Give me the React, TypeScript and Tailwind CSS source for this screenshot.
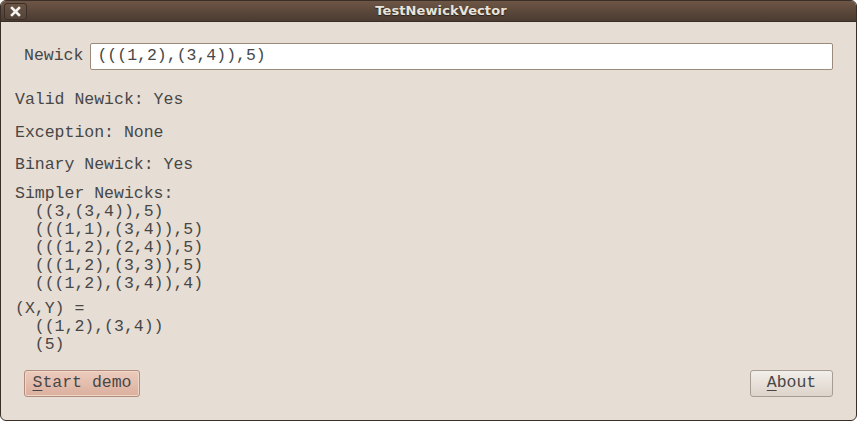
import React from 'react';

const mono = { fontFamily: '"Liberation Mono", "Courier New", monospace' };

const simpler = [
  '  ((3,(3,4)),5)',
  '  (((1,1),(3,4)),5)',
  '  (((1,2),(2,4)),5)',
  '  (((1,2),(3,3)),5)',
  '  (((1,2),(3,4)),4)',
];

export default function App() {
  return (
    <div className="w-[857px] h-[421px] bg-white">
      <div className="w-[857px] h-[421px] flex flex-col rounded-t-[6px] rounded-b-[6px] overflow-hidden border border-[#3a2f28] bg-[#e6ddd4]">
        {/* title bar */}
        <div className="relative h-[21px] shrink-0 flex items-center justify-center pl-[25px] bg-gradient-to-b from-[#6e5646] to-[#4a3b31] border-b border-[#3a2f28]">
          <div className="absolute left-[3px] top-[2px] w-[23px] h-[17px] rounded-[3px] border border-[#3b2f27] bg-gradient-to-b from-[#6a5444] to-[#54433a] flex items-center justify-center">
            <svg width="11" height="11" viewBox="0 0 11 11">
              <path d="M2 2 L9 9 M9 2 L2 9" stroke="#f4f2ee" strokeWidth="2.6" strokeLinecap="square" />
            </svg>
          </div>
          <span
            className="text-[13px] font-bold text-[#e8e4dc] tracking-[0.1px] [text-shadow:0_1px_1px_#2a211c]"
            style={{ fontFamily: '"DejaVu Sans", sans-serif' }}
          >
            TestNewickVector
          </span>
        </div>

        {/* body */}
        <div className="flex-1 flex flex-col text-[16.5px] text-[#474747]" style={mono}>
          <div className="flex items-center pt-[21px] pl-[23px] pr-[23px]">
            <span className="mr-[7px]">Newick</span>
            <div className="flex-1 h-[27px] flex items-center bg-white border border-[#9c8a7a] rounded-[2px] px-[6px]">
              (((1,2),(3,4)),5)
            </div>
          </div>

          <div className="pl-[14px] leading-[18px]">
            <div className="mt-[21px]">Valid Newick: Yes</div>
            <div className="mt-[15px]">Exception: None</div>
            <div className="mt-[14px]">Binary Newick: Yes</div>
            <div className="mt-[11px] whitespace-pre">
              <div>Simpler Newicks:</div>
              {simpler.map((s) => (
                <div key={s}>{s}</div>
              ))}
            </div>
            <div className="mt-[7px] whitespace-pre">
              <div>(X,Y) =</div>
              <div>{'  ((1,2),(3,4))'}</div>
              <div>{'  (5)'}</div>
            </div>
          </div>

          <div className="flex justify-between items-center mt-[16px] pl-[23px] pr-[23px]">
            <button className="h-[27px] w-[116px] rounded-[3px] border border-[#b28d7d] bg-gradient-to-b from-[#ecccbe] to-[#dbaf9d] text-[#474747] shadow-[inset_0_0_0_1px_#f1d6ca]">
              <span className="underline underline-offset-[3px]">S</span>tart demo
            </button>
            <button className="h-[27px] w-[83px] rounded-[3px] border border-[#a89d92] bg-gradient-to-b from-[#f2eee9] to-[#ddd4ca] text-[#474747]">
              <span className="underline underline-offset-[3px]">A</span>bout
            </button>
          </div>
        </div>
      </div>
    </div>
  );
}
